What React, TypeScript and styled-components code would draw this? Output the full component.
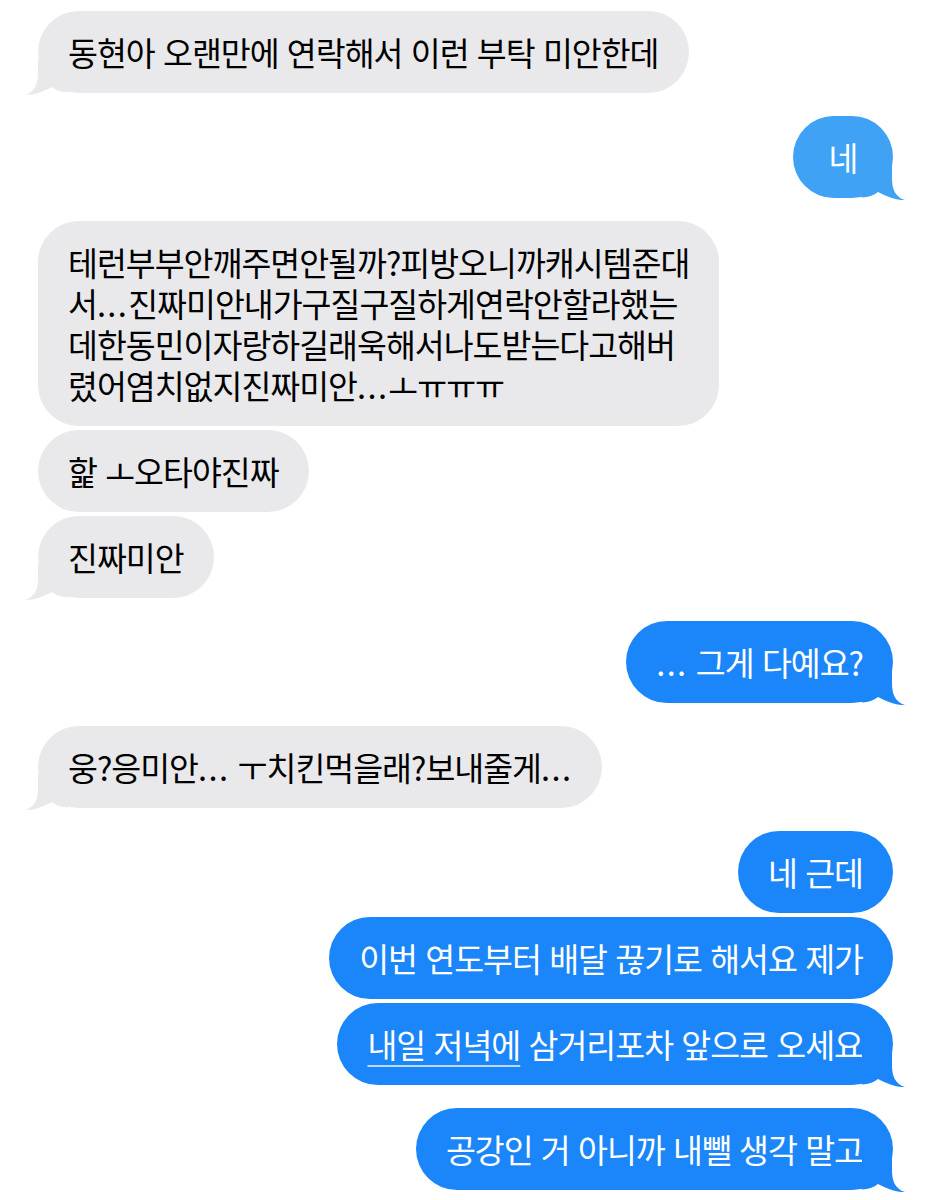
import React from 'react';
import styled, { createGlobalStyle } from 'styled-components';

const GlobalStyle = createGlobalStyle`
  html, body {
    margin: 0;
    padding: 0;
    background: #ffffff;
  }
  body {
    font-family: "Noto Sans CJK KR", "Noto Sans", sans-serif;
    -webkit-font-smoothing: antialiased;
  }
`;

const COLORS = {
  gray: '#e9e9eb',
  lightBlue: '#40a2f5',
  blue: '#1b86fa',
};

type Side = 'left' | 'right';

const Thread = styled.div`
  display: flex;
  flex-direction: column;
  gap: 23px;
  padding: 11px 39px 9px 38px;
`;

const Group = styled.div<{ $side: Side }>`
  display: flex;
  flex-direction: column;
  align-items: ${(p) => (p.$side === 'left' ? 'flex-start' : 'flex-end')};
  gap: 4px;
`;

const Bubble = styled.div<{ $bg: string; $side: Side }>`
  position: relative;
  box-sizing: border-box;
  min-width: 100px;
  padding: 20px 30px 21px;
  border-radius: 41px;
  background: ${(p) => p.$bg};
  color: ${(p) => (p.$side === 'left' ? '#000000' : '#ffffff')};
  font-size: 32.5px;
  line-height: 41px;
  letter-spacing: -1px;
  word-spacing: 2px;
  text-align: center;
  white-space: nowrap;
`;

const Line = styled.div`
  text-align: left;
`;

// the periods of an ellipsis sit wider apart in the screenshot
const Dots = styled.span`
  letter-spacing: 1.4px;
`;

const Link = styled.span`
  text-decoration: underline;
  text-decoration-color: rgba(255, 255, 255, 0.7);
  text-decoration-thickness: 2px;
  text-underline-offset: 7px;
`;

const TailSvg = styled.svg<{ $side: Side }>`
  position: absolute;
  bottom: -2px;
  width: 44px;
  height: 36px;
  ${(p) => (p.$side === 'right' ? 'right: -13px;' : 'left: -14px; transform: scaleX(-1);')}
`;

function Tail({ side, color }: { side: Side; color: string }) {
  return (
    <TailSvg $side={side} viewBox="0 0 44 36">
      <path
        d="M0 0 H30 V14 C30 25 33 33 43 36 C36 36.5 25 33 16 28 C12 31.5 6 33 0 33.6 Z"
        fill={color}
      />
    </TailSvg>
  );
}

function withDots(text: string) {
  const parts = text.split('...');
  return parts.map((p, i) => (
    <React.Fragment key={i}>
      {p}
      {i < parts.length - 1 && <Dots>...</Dots>}
    </React.Fragment>
  ));
}

type Msg = { lines: React.ReactNode[]; color?: string };
type Block = { side: Side; msgs: Msg[] };

const thread: Block[] = [
  { side: 'left', msgs: [{ lines: ['동현아 오랜만에 연락해서 이런 부탁 미안한데'] }] },
  { side: 'right', msgs: [{ lines: ['네'], color: COLORS.lightBlue }] },
  {
    side: 'left',
    msgs: [
      {
        lines: [
          '테런부부안깨주면안될까?피방오니까캐시템준대',
          '서...진짜미안내가구질구질하게연락안할라했는',
          '데한동민이자랑하길래욱해서나도받는다고해버',
          '렸어염치없지진짜미안...ㅗㅠㅠㅠ',
        ],
      },
      { lines: ['핥 ㅗ오타야진짜'] },
      { lines: ['진짜미안'] },
    ],
  },
  { side: 'right', msgs: [{ lines: ['... 그게 다예요?'] }] },
  { side: 'left', msgs: [{ lines: ['웅?응미안... ㅜ치킨먹을래?보내줄게...'] }] },
  {
    side: 'right',
    msgs: [
      { lines: ['네 근데'] },
      { lines: ['이번 연도부터 배달 끊기로 해서요 제가'] },
      {
        lines: [
          <>
            <Link>내일 저녁에</Link> 삼거리포차 앞으로 오세요
          </>,
        ],
      },
    ],
  },
  { side: 'right', msgs: [{ lines: ['공강인 거 아니까 내뺄 생각 말고'] }] },
];

const render = (l: React.ReactNode) => (typeof l === 'string' ? withDots(l) : l);

export default function App() {
  return (
    <>
      <GlobalStyle />
      <Thread>
        {thread.map((block, bi) => (
          <Group key={bi} $side={block.side}>
            {block.msgs.map((m, mi) => {
              const color = m.color ?? (block.side === 'left' ? COLORS.gray : COLORS.blue);
              const last = mi === block.msgs.length - 1;
              return (
                <Bubble key={mi} $bg={color} $side={block.side}>
                  {m.lines.length > 1
                    ? m.lines.map((l, li) => <Line key={li}>{render(l)}</Line>)
                    : render(m.lines[0])}
                  {last && <Tail side={block.side} color={color} />}
                </Bubble>
              );
            })}
          </Group>
        ))}
      </Thread>
    </>
  );
}
